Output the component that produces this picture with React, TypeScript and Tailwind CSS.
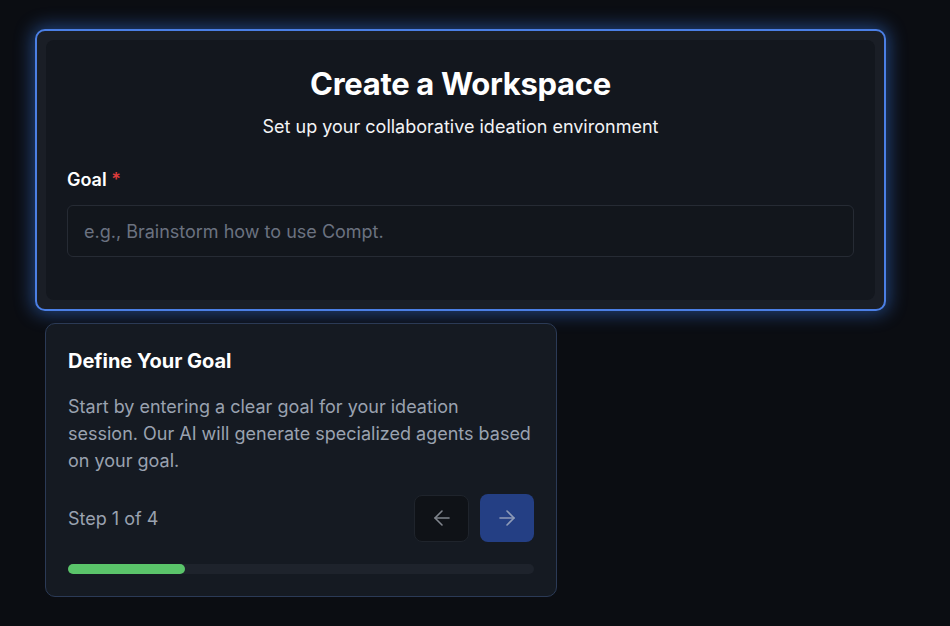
import { ArrowLeft, ArrowRight } from "lucide-react";

const steps = 4;
const current = 1;

function WorkspaceCard() {
  return (
    <div className="h-[282px] w-[851px] rounded-[10px] border-2 border-[#4b7fe5] bg-[#1a1e26] p-[9px] shadow-[0_0_18px_3px_rgba(59,130,246,0.45)]">
      <div className="flex h-full flex-col rounded-lg bg-[#13171e] px-[21px] pt-[25px]">
        <h1 className="text-center text-[31px] font-bold leading-[38px] tracking-[-0.01em] text-white">
          Create a Workspace
        </h1>
        <p className="mt-[11px] text-center text-[18px] leading-[26px] text-[#f3f4f6]">
          Set up your collaborative ideation environment
        </p>
        <label className="mt-[28px] text-[18px] font-semibold leading-[24px] text-white">
          Goal <span className="text-[#dc3b3b]">*</span>
        </label>
        <input
          type="text"
          placeholder="e.g., Brainstorm how to use Compt."
          className="mt-[13px] h-[52px] w-full rounded-md border border-[#262b34] bg-[#12161c] px-[16px] text-[18px] text-white outline-none placeholder:text-[#6b7280]"
        />
      </div>
    </div>
  );
}

function TourTooltip() {
  return (
    <div className="ml-[10px] mt-[12px] w-[512px] rounded-[10px] border border-[#2b3a56] bg-[#151a22] px-[22px] pb-[22px] pt-[23px]">
      <h3 className="text-[20px] font-bold leading-[28px] text-white">
        Define Your Goal
      </h3>
      <p className="mt-[18px] whitespace-nowrap text-[18px] leading-[27px] text-[#9aa2b0]">
        Start by entering a clear goal for your ideation
        <br />
        session. Our AI will generate specialized agents based
        <br />
        on your goal.
      </p>
      <div className="mt-[20px] flex items-center justify-between">
        <span className="text-[18px] text-[#9aa2b0]">
          Step {current} of {steps}
        </span>
        <div className="flex items-center gap-[11px]">
          <button
            type="button"
            className="flex h-[47px] w-[55px] items-center justify-center rounded-lg border border-[#1f242c] bg-[#0f1217] text-[#80858d]"
          >
            <ArrowLeft size={24} strokeWidth={1.6} />
          </button>
          <button
            type="button"
            className="flex h-[48px] w-[54px] items-center justify-center rounded-lg bg-[#243f84] text-[#8e9bb8]"
          >
            <ArrowRight size={24} strokeWidth={1.6} />
          </button>
        </div>
      </div>
      <div className="mt-[22px] h-[10px] w-full rounded-full bg-[#1e232c]">
        <div
          className="h-full rounded-full bg-[#5ac46a]"
          style={{ width: `${(current / steps) * 100}%` }}
        />
      </div>
    </div>
  );
}

export default function App() {
  return (
    <div className="min-h-screen bg-[#0b0d12] pl-[35px] pt-[29px] font-['Inter',sans-serif]">
      <WorkspaceCard />
      <TourTooltip />
    </div>
  );
}
